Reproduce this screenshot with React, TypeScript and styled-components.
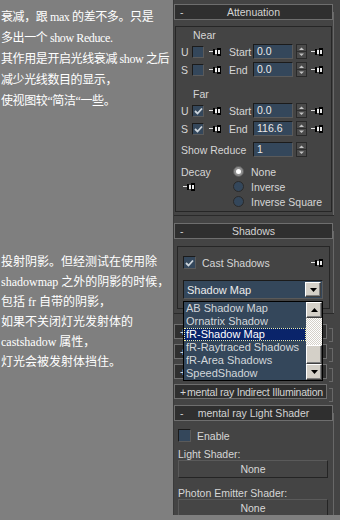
import React from 'react';
import styled, { createGlobalStyle } from 'styled-components';

const GlobalStyle = createGlobalStyle`
    html, body {
        margin: 0;
        padding: 0;
        background: #7f7f7f;
    }
`;

const Page = styled.div`
    display: flex;
    width: 340px;
    height: 520px;
    background: #7f7f7f;
    overflow: hidden;
`;

const Notes = styled.div`
    width: 173px;
    flex: none;
    box-sizing: border-box;
    padding-left: 1px;
    overflow: hidden;
    color: #fff;
    font-family: "Liberation Serif", "Noto Sans CJK SC", serif;
    font-size: 12px;
`;
const NoteBlock = styled.div<{ $top: number; $lh: number; $spacing?: number }>`
    margin-top: ${p => p.$top}px;
    line-height: ${p => p.$lh}px;
    letter-spacing: ${p => p.$spacing ?? 0}px;
    white-space: nowrap;
`;

const Panel = styled.div`
    width: 167px;
    height: 515px;
    flex: none;
    box-sizing: border-box;
    border-left: 1px solid #3a3a3a;
    background: #444;
    padding-top: 4px;
    overflow: hidden;
    font-family: "Liberation Sans", Arial, sans-serif;
    font-size: 10.5px;
    color: #d6d6d6;
`;

const Rollout = styled.div<{ $top: number; $pad: number }>`
    position: relative;
    width: 160px;
    box-sizing: border-box;
    margin-top: ${p => p.$top}px;
    padding-bottom: ${p => p.$pad}px;
    border-bottom: 1px solid #2a2a2a;

    &::after {
        content: '';
        position: absolute;
        top: 8px;
        bottom: 0;
        right: 0;
        width: 1px;
        background: #686868;
    }
`;
const Collapsed = styled.div<{ $top: number }>`
    position: relative;
    width: 160px;
    margin-top: ${p => p.$top}px;

    &::after {
        content: '';
        position: absolute;
        top: 4px;
        right: 1px;
        width: 3px;
        height: 12px;
        border: 1px solid #686868;
        border-left: none;
    }
`;
const Header = styled.div<{ $width: number; $height: number }>`
    display: grid;
    align-items: center;
    width: ${p => p.$width}px;
    height: ${p => p.$height}px;
    box-sizing: border-box;
    border: 1px solid #6e6e6e;
    background: #2f2f2f;
    color: #d4d4d4;
    white-space: nowrap;
    overflow: hidden;
`;
const Sign = styled.span`
    grid-area: 1 / 1;
    justify-self: start;
    margin-left: 5px;
`;
const Title = styled.span<{ $start?: boolean }>`
    grid-area: 1 / 1;
    justify-self: ${p => (p.$start ? 'start' : 'center')};
    margin-left: ${p => (p.$start ? '12px' : '0')};
    letter-spacing: ${p => (p.$start ? '-0.2px' : '0')};
`;

const Group = styled.div<{ $top: number; $left: number; $width: number; $height: number }>`
    display: flex;
    flex-direction: column;
    margin: ${p => p.$top}px 0 0 ${p => p.$left}px;
    width: ${p => p.$width}px;
    height: ${p => p.$height}px;
    box-sizing: border-box;
    border: 1px solid #262626;
    padding-left: 5px;
`;
const GroupTitle = styled.div<{ $top: number }>`
    margin: ${p => p.$top}px 0 0 12px;
    line-height: 12px;
    height: 12px;
`;
const ParamRow = styled.div<{ $top: number; $height?: number }>`
    display: flex;
    align-items: center;
    height: ${p => p.$height ?? 15}px;
    margin-top: ${p => p.$top}px;
    white-space: nowrap;
`;
const Letter = styled.span`
    width: 11px;
    flex: none;
`;
const FieldLabel = styled.span<{ $width: number; $left?: number }>`
    width: ${p => p.$width}px;
    margin-left: ${p => p.$left ?? 0}px;
    flex: none;
`;
const Field = styled.div`
    width: 40px;
    height: 15px;
    flex: none;
    box-sizing: border-box;
    border: 1px solid;
    border-color: #1b1b1b #5a5a5a #5a5a5a #1b1b1b;
    background: #34475b;
    color: #eaeaea;
    padding-left: 3px;
    line-height: 13px;
`;
const SpinBox = styled.div`
    display: flex;
    width: 11px;
    height: 15px;
    flex: none;
    margin-left: 3px;
    box-sizing: border-box;
    border: 1px solid #2a2a2a;
    background: #4a4a4a;
`;
const Box = styled.span<{ $size: number }>`
    display: flex;
    align-items: center;
    justify-content: center;
    width: ${p => p.$size}px;
    height: ${p => p.$size}px;
    flex: none;
    box-sizing: border-box;
    border: 1px solid;
    border-color: #1b1b1b #5a5a5a #5a5a5a #1b1b1b;
    background: #34475b;
`;
const PinSvg = styled.svg<{ $left?: number; $right?: number }>`
    flex: none;
    margin-left: ${p => (p.$left === undefined ? 'auto' : `${p.$left}px`)};
    margin-right: ${p => p.$right ?? 0}px;
`;

const DecayBlock = styled.div`
    display: flex;
    margin-top: 7px;
`;
const DecayLeft = styled.div`
    display: flex;
    flex-direction: column;
    width: 52px;
    flex: none;
`;
const Line15 = styled.div`
    display: flex;
    align-items: center;
    height: 15px;
`;
const RadioList = styled.div`
    display: flex;
    flex-direction: column;
`;
const Radio = styled.span<{ $on?: boolean }>`
    display: flex;
    align-items: center;
    justify-content: center;
    width: 11px;
    height: 11px;
    margin-right: 7px;
    box-sizing: border-box;
    border-radius: 50%;
    border: 1px solid ${p => (p.$on ? '#5c5c5c' : '#2a2a2a')};
    background: ${p => (p.$on ? '#8e8e8e' : '#34475b')};

    &::after {
        content: '';
        display: ${p => (p.$on ? 'block' : 'none')};
        width: 5px;
        height: 5px;
        border-radius: 50%;
        background: #fff;
    }
`;

const CheckLabel = styled.span`
    margin-left: 6px;
`;
const ComboWrap = styled.div`
    position: relative;
    margin-top: 11px;
    width: 140px;
`;
const Combo = styled.div`
    display: flex;
    align-items: center;
    height: 19px;
    box-sizing: border-box;
    border: 1px solid;
    border-color: #1b1b1b #5a5a5a #5a5a5a #1b1b1b;
    background: #34475b;
    color: #ececec;
    font-size: 11px;
`;
const ComboText = styled.span`
    flex: 1;
    padding-left: 3px;
`;
const Bevel = styled.span<{ $height: number; $right?: number }>`
    display: flex;
    align-items: center;
    justify-content: center;
    width: 16px;
    height: ${p => p.$height}px;
    flex: none;
    margin-right: ${p => p.$right ?? 0}px;
    box-sizing: border-box;
    border: 1px solid;
    border-color: #fff #404040 #404040 #fff;
    box-shadow: inset -1px -1px #808080;
    background: #d4d0c8;
`;
const DropList = styled.div`
    position: absolute;
    z-index: 10;
    top: 21px;
    left: 0;
    display: flex;
    width: 140px;
    height: 80px;
    box-sizing: border-box;
    border: 1px solid #000;
    background: #34475b;
    font-size: 11px;
`;
const Items = styled.div`
    flex: 1;
    display: flex;
    flex-direction: column;
`;
const Item = styled.div<{ $active?: boolean }>`
    height: 13px;
    line-height: 13px;
    padding-left: 2px;
    white-space: nowrap;
    color: ${p => (p.$active ? '#fff' : '#d2d6da')};
    background: ${p => (p.$active ? '#0a246a' : 'transparent')};
    outline: ${p => (p.$active ? '1px dotted #f0f0a0' : 'none')};
    outline-offset: -1px;
`;
const ScrollBar = styled.div`
    display: flex;
    flex-direction: column;
    width: 16px;
    flex: none;
`;
const Track = styled.div`
    flex: 1;
    background: repeating-conic-gradient(#fff 0 25%, #d4d0c8 0 50%) 0 0 / 2px 2px;
`;

const ShaderBody = styled.div`
    display: flex;
    flex-direction: column;
    padding-left: 4px;
`;
const ShaderLabel = styled.div<{ $top: number }>`
    margin-top: ${p => p.$top}px;
    height: 12px;
    line-height: 12px;
`;
const NoneButton = styled.div`
    width: 150px;
    height: 18px;
    box-sizing: border-box;
    border: 1px solid;
    border-color: #5a5a5a #242424 #242424 #5a5a5a;
    background: #454545;
    text-align: center;
    line-height: 16px;
    color: #d8d8d8;
`;

const Pin = ({ left, right }: { left?: number; right?: number }) => (
    <PinSvg $left={left} $right={right} width="12" height="8" viewBox="0 0 12 8">
        <rect x="0" y="3" width="4" height="1" fill="#e0e0e0" />
        <rect x="4" y="1" width="2" height="6" fill="#000" />
        <rect x="6" y="2" width="2" height="4" fill="#f0f0f0" />
        <rect x="8" y="0" width="4" height="8" fill="#000" />
        <rect x="9" y="2" width="2" height="4" fill="#e8e8e8" />
    </PinSvg>
);

const Check = ({ size, on }: { size: number; on?: boolean }) => (
    <Box $size={size}>
        {on && (
            <svg width="9" height="8" viewBox="0 0 9 8">
                <path d="M1 4 L3.5 6.5 L8 1.5" stroke="#cdd5dc" strokeWidth="1.8" fill="none" />
            </svg>
        )}
    </Box>
);

const SpinField = ({ value }: { value: string }) => (
    <>
        <Field>{value}</Field>
        <SpinBox>
            <svg width="9" height="13" viewBox="0 0 9 13">
                <polygon points="2,5 4.5,2.5 7,5" fill="#c4c4c4" />
                <rect x="0" y="6" width="9" height="1" fill="#2e2e2e" />
                <polygon points="2,8.5 7,8.5 4.5,11" fill="#c4c4c4" />
            </svg>
        </SpinBox>
    </>
);

const Tri = ({ up }: { up?: boolean }) => (
    <svg width="7" height="4" viewBox="0 0 7 4">
        <polygon points={up ? '0,4 7,4 3.5,0' : '0,0 7,0 3.5,4'} fill="#000" />
    </svg>
);

const ParamLine = ({ letter, on, label, value, top }: { letter: string; on?: boolean; label: string; value: string; top: number }) => (
    <ParamRow $top={top}>
        <Letter>{letter}</Letter>
        <Check size={12} on={on} />
        <Pin left={5} />
        <FieldLabel $width={24} $left={8}>{label}</FieldLabel>
        <SpinField value={value} />
        <Pin left={4} />
    </ParamRow>
);

const Head = ({ sign, title }: { sign: string; title: string }) => (
    <Header $width={159} $height={16}>
        <Sign>{sign}</Sign>
        <Title>{title}</Title>
    </Header>
);

// collapsed rollouts: only the "+" shows beside the open drop-down list
const ClosedHead = ({ title }: { title?: string }) => (
    <Header $width={153} $height={15}>
        <Sign>+</Sign>
        {title && <Title $start>{title}</Title>}
    </Header>
);

const shadowTypes = ['AB Shadow Map', 'Ornatrix Shadow', 'fR-Shadow Map', 'fR-Raytraced Shadows', 'fR-Area Shadows', 'SpeedShadow'];

const App = () => {
    return (
        <Page>
            <GlobalStyle />
            <Notes>
                <NoteBlock $top={7} $lh={21} $spacing={-0.4}>
                    <div>衰减，跟 max 的差不多。只是</div>
                    <div>多出一个 show Reduce.</div>
                    <div>其作用是开启光线衰减 show 之后</div>
                    <div>减少光线数目的显示，</div>
                    <div>使视图较“简洁“一些。</div>
                </NoteBlock>
                <NoteBlock $top={140} $lh={20}>
                    <div>投射阴影。但经测试在使用除</div>
                    <div>shadowmap 之外的阴影的时候，</div>
                    <div>包括 fr 自带的阴影，</div>
                    <div>如果不关闭灯光发射体的</div>
                    <div>castshadow 属性，</div>
                    <div>灯光会被发射体挡住。</div>
                </NoteBlock>
            </Notes>

            <Panel>
                <Rollout $top={0} $pad={3}>
                    <Head sign="-" title="Attenuation" />
                    <Group $top={6} $left={1} $width={157} $height={186}>
                        <GroupTitle $top={2}>Near</GroupTitle>
                        <ParamLine top={3} letter="U" label="Start" value="0.0" />
                        <ParamLine top={3} letter="S" label="End" value="0.0" />
                        <GroupTitle $top={11}>Far</GroupTitle>
                        <ParamLine top={3} letter="U" on label="Start" value="0.0" />
                        <ParamLine top={3} letter="S" on label="End" value="116.6" />
                        <ParamRow $top={6}>
                            <FieldLabel $width={72}>Show Reduce</FieldLabel>
                            <SpinField value="1" />
                        </ParamRow>
                        <DecayBlock>
                            <DecayLeft>
                                <Line15>Decay</Line15>
                                <Line15>
                                    <Pin left={2} />
                                </Line15>
                            </DecayLeft>
                            <RadioList>
                                <Line15><Radio $on />None</Line15>
                                <Line15><Radio />Inverse</Line15>
                                <Line15><Radio />Inverse Square</Line15>
                            </RadioList>
                        </DecayBlock>
                    </Group>
                </Rollout>

                <Rollout $top={7} $pad={4}>
                    <Head sign="-" title="Shadows" />
                    <Group $top={7} $left={3} $width={153} $height={63}>
                        <ParamRow $top={9} $height={13}>
                            <Check size={13} on />
                            <CheckLabel>Cast Shadows</CheckLabel>
                            <Pin right={6} />
                        </ParamRow>
                        <ComboWrap>
                            <Combo>
                                <ComboText>Shadow Map</ComboText>
                                <Bevel $height={15} $right={1}>
                                    <Tri />
                                </Bevel>
                            </Combo>
                            <DropList>
                                <Items>
                                    {shadowTypes.map(t => (
                                        <Item key={t} $active={t === 'fR-Shadow Map'}>{t}</Item>
                                    ))}
                                </Items>
                                <ScrollBar>
                                    <Bevel $height={16}><Tri up /></Bevel>
                                    <Track />
                                    <Bevel $height={19} />
                                    <Bevel $height={16}><Tri /></Bevel>
                                </ScrollBar>
                            </DropList>
                        </ComboWrap>
                    </Group>
                </Rollout>

                <Collapsed $top={10}><ClosedHead /></Collapsed>
                <Collapsed $top={5}><ClosedHead /></Collapsed>
                <Collapsed $top={5}><ClosedHead /></Collapsed>
                <Collapsed $top={5}><ClosedHead title="mental ray Indirect Illumination" /></Collapsed>

                <Rollout $top={6} $pad={0}>
                    <Head sign="-" title="mental ray Light Shader" />
                    <ShaderBody>
                        <ParamRow $top={8} $height={13}>
                            <Check size={13} />
                            <CheckLabel>Enable</CheckLabel>
                        </ParamRow>
                        <ShaderLabel $top={6}>Light Shader:</ShaderLabel>
                        <NoneButton>None</NoneButton>
                        <ShaderLabel $top={9}>Photon Emitter Shader:</ShaderLabel>
                        <NoneButton>None</NoneButton>
                    </ShaderBody>
                </Rollout>
            </Panel>
        </Page>
    );
};

export default App;
